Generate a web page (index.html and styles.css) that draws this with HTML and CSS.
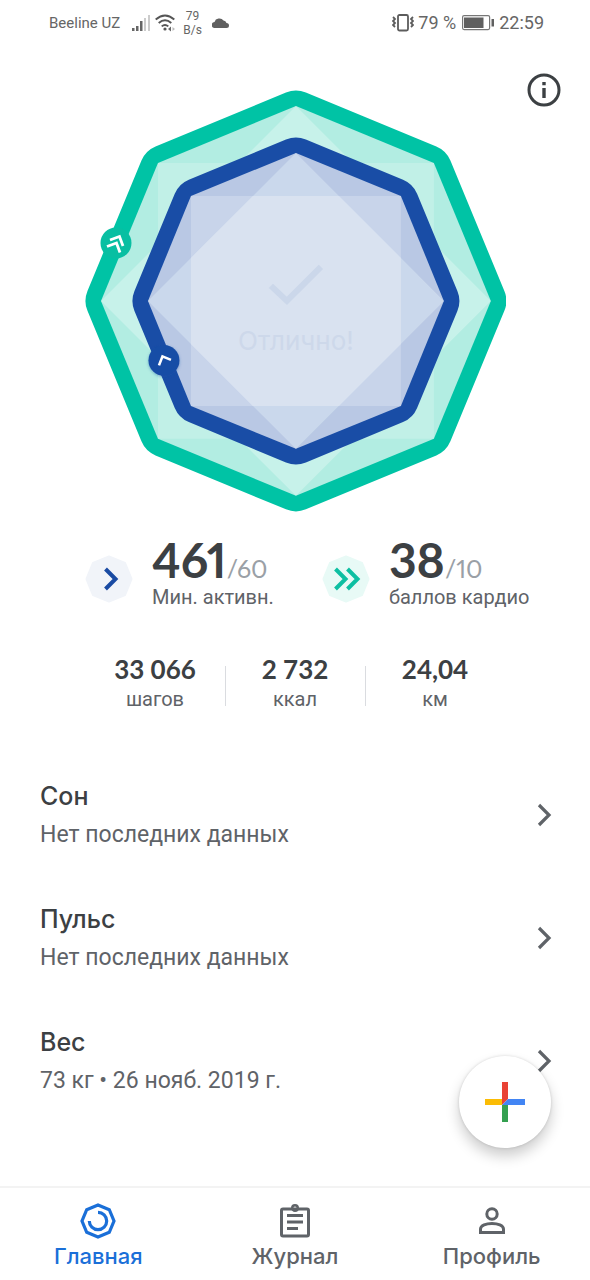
FILE: index.html
```html
<!DOCTYPE html>
<html lang="ru">
<head>
<meta charset="utf-8">
<meta name="viewport" content="width=device-width, initial-scale=1">
<title>Главная</title>
<link rel="stylesheet" href="styles.css">
</head>
<body>
<header class="status">
  <div class="status-group">
    <span class="carrier">Beeline UZ</span>
    <svg class="signal" width="18" height="18" viewBox="0 0 18 18" aria-hidden="true">
      <path fill="#666" d="M0 14h2.500v3H0zM4 12h2.500v5H4zM8 7h2.500v10H8z"/>
      <path fill="#ccc" d="M12 4h2v13h-2zM16 1h2v16h-2z"/>
    </svg>
    <svg class="wifi" width="20" height="18" viewBox="0 0 20 18" fill="none" stroke="#555" stroke-width="1.900" aria-hidden="true">
      <path d="M.7 5.500Q10-2.500 19.300 5.500M3.700 9Q10 3.500 16.300 9M6.700 12.400Q10 9.500 13.300 12.400"/>
      <circle cx="10" cy="15" r="1.600" fill="#555" stroke="none"/>
      <path fill="#666" stroke="none" d="M16 12.500v5L13 15z"/>
      <path fill="#bbb" stroke="none" d="M17.500 13l2.500 2-2.500 2z"/>
    </svg>
    <span class="speed">79<br>B/s</span>
    <svg class="cloud" width="17" height="10" viewBox="0 0 17 10" aria-hidden="true">
      <path fill="#606060" d="M3 10A3 3 0 0 1 2.500 4 5 4.500 0 0 1 11.500 2.500 3.500 3.500 0 0 1 14.500 5 2.500 2.500 0 0 1 14.500 10z"/>
    </svg>
  </div>
  <div class="status-group">
    <svg width="22" height="18" viewBox="0 0 22 18" fill="none" stroke="#5c5c5c" stroke-width="1.800" aria-hidden="true">
      <rect x="6" y="1" width="10" height="15.500" rx="1.500"/>
      <path d="M1 3l2 2-2 2 2 2-2 2 2 2M21 3l-2 2 2 2-2 2 2 2-2 2"/>
    </svg>
    <span class="clock">79 %</span>
    <svg class="battery" width="32" height="16" viewBox="0 0 32 16" aria-hidden="true">
      <rect x=".6" y=".6" width="27" height="14" rx="1.500" fill="none" stroke="#777" stroke-width="1.200"/>
      <path fill="#606060" d="M2 2.500h19.500v10.500H2zM29.500 4H32v7.500h-2.500z"/>
    </svg>
    <span class="clock">22:59</span>
  </div>
</header>

<main class="content">
  <section class="hero">
    <svg class="chart" viewBox="0 0 422 422" role="img" aria-label="Отлично!">
      <defs>
        <filter id="soft" x="-50%" y="-50%" width="200%" height="200%">
          <feDropShadow dx="0" dy="1" stdDeviation="1.500" flood-color="#1a4fa6" flood-opacity=".4"/>
        </filter>
      </defs>
      <g transform="translate(212 211)">
        <path fill="#00c3a5" stroke="#00c3a5" stroke-width="52" stroke-linejoin="round" d="M0-184.500L130.500-130.500 184.500 0 130.500 130.500 0 184.500-130.500 130.500-184.500 0-130.500-130.500z"/>
        <path fill="#b2ede2" d="M0-195L138-138 195 0 138 138 0 195-138 138-195 0-138-138z"/>
        <path fill="#fff" fill-opacity=".2" d="M-138-138h276v276h-276z"/>
        <path fill="#fff" fill-opacity=".28" d="M0-195L195 0 0 195-195 0z"/>
        <path fill="#194da6" stroke="#194da6" stroke-width="52" stroke-linejoin="round" d="M0-137.500L97.200-97.200 137.500 0 97.200 97.200 0 137.500-97.200 97.200-137.500 0-97.200-97.200z"/>
        <path fill="#b9c8e4" d="M0-148L105-105 148 0 105 105 0 148-105 105-148 0-105-105z"/>
        <path fill="#fff" fill-opacity=".22" d="M-105-105h210v210h-210z"/>
        <path fill="#d9e6f2" fill-opacity=".55" d="M0-148L148 0 0 148-148 0z"/>
        <path fill="#d9e2f0" d="M-43-105H43L105-43V43L43 105H-43L-105 43V-43z"/>
        <path fill="none" stroke="#cbd7ea" stroke-width="6" d="M-25-15L-9 0 25-34"/>
        <text class="chart-label" x="0" y="49">Отлично!</text>
        <circle cx="-180" cy="-58" r="15.500" fill="#08bfa2"/>
        <path fill="none" stroke="#fff" stroke-width="2.800" d="M-186-61L-176.500-64.500-173-55M-189-54.500L-179.500-58-176-48.500"/>
        <circle cx="-132" cy="59.500" r="15.500" fill="#194da6" filter="url(#soft)"/>
        <path fill="none" stroke="#fff" stroke-width="2.600" d="M-137 64.500L-133.500 55.500-125 59"/>
      </g>
    </svg>
    <button class="info" type="button" aria-label="Информация">
      <svg width="34" height="34" viewBox="0 0 34 34" aria-hidden="true">
        <circle cx="17" cy="17" r="15" fill="none" stroke="#3c4043" stroke-width="3"/>
        <path fill="#3c4043" d="M15.300 9h3.400v3.300h-3.400zM15.300 15h3.400v10h-3.400z"/>
      </svg>
    </button>
  </section>

  <section class="goals">
    <div class="goal">
      <svg class="goal-icon" width="48" height="48" viewBox="0 0 48 48" aria-hidden="true">
        <path fill="#f1f4f9" stroke="#f1f4f9" stroke-width="2" stroke-linejoin="round" d="M24 1.500l16 6.500 6.500 16L40 40l-16 6.500L8 40 1.500 24 8 8z"/>
        <path fill="none" stroke="#1a4ba3" stroke-width="4" d="M20.500 14L30.500 24l-10 10"/>
      </svg>
      <div>
        <div class="goal-value"><strong>461</strong><span>/60</span></div>
        <div class="caption">Мин. активн.</div>
      </div>
    </div>
    <div class="goal">
      <svg class="goal-icon" width="48" height="48" viewBox="0 0 48 48" aria-hidden="true">
        <path fill="#e8faf6" stroke="#e8faf6" stroke-width="2" stroke-linejoin="round" d="M24 1.500l16 6.500 6.500 16L40 40l-16 6.500L8 40 1.500 24 8 8z"/>
        <path fill="none" stroke="#0dbfa2" stroke-width="4" d="M13.500 14l10 10-10 10M25.500 14l10 10-10 10"/>
      </svg>
      <div>
        <div class="goal-value"><strong>38</strong><span>/10</span></div>
        <div class="caption">баллов кардио</div>
      </div>
    </div>
  </section>

  <section class="totals">
    <div class="total"><strong>33 066</strong><span class="caption">шагов</span></div>
    <div class="total"><strong>2 732</strong><span class="caption">ккал</span></div>
    <div class="total"><strong>24,04</strong><span class="caption">км</span></div>
  </section>

  <section class="cards">
    <a class="card" href="#sleep">
      <span><span class="card-title">Сон</span><span class="card-text">Нет последних данных</span></span>
      <svg width="16" height="24" viewBox="0 0 16 24" fill="none" stroke="#5f6368" stroke-width="3.200" aria-hidden="true"><path d="M3 2l10 10L3 22"/></svg>
    </a>
    <a class="card" href="#pulse">
      <span><span class="card-title">Пульс</span><span class="card-text">Нет последних данных</span></span>
      <svg width="16" height="24" viewBox="0 0 16 24" fill="none" stroke="#5f6368" stroke-width="3.200" aria-hidden="true"><path d="M3 2l10 10L3 22"/></svg>
    </a>
    <a class="card" href="#weight">
      <span><span class="card-title">Вес</span><span class="card-text">73 кг • 26 нояб. 2019 г.</span></span>
      <svg width="16" height="24" viewBox="0 0 16 24" fill="none" stroke="#5f6368" stroke-width="3.200" aria-hidden="true"><path d="M3 2l10 10L3 22"/></svg>
    </a>
  </section>
</main>

<footer class="bottom">
  <button class="fab" type="button" aria-label="Добавить">
    <svg width="40" height="40" viewBox="0 0 40 40" aria-hidden="true">
      <path fill="#e94235" d="M17 0h6v17l-6 6z"/>
      <path fill="#fbbc05" d="M0 17h17v6H0z"/>
      <path fill="#34a050" d="M17 23h6v17h-6z"/>
      <path fill="#4285f4" d="M23 17h17v6H17z"/>
    </svg>
  </button>
  <nav class="tabs">
    <a class="tab tab-active" href="#home" aria-current="page">
      <svg width="38" height="38" viewBox="0 0 38 38" fill="none" stroke="currentColor" stroke-width="3.200" aria-hidden="true">
        <path d="M19 3l11.300 4.700L35 19l-4.700 11.300L19 35 7.700 30.300 3 19 7.700 7.700z"/>
        <path d="M19 10.300A8.700 8.700 0 1 1 10.300 19"/>
      </svg>
      Главная
    </a>
    <a class="tab" href="#journal">
      <svg width="38" height="38" viewBox="0 0 38 38" fill="none" stroke="currentColor" stroke-width="3" aria-hidden="true">
        <rect x="5.500" y="7" width="27" height="27" rx="1.500"/>
        <path d="M11 13.500h16M11 20h16M11 26.500h11"/>
        <circle cx="19" cy="6" r="2.800" stroke-width="2.400"/>
      </svg>
      Журнал
    </a>
    <a class="tab" href="#profile">
      <svg width="38" height="38" viewBox="0 0 38 38" fill="none" stroke="currentColor" stroke-width="3" aria-hidden="true">
        <circle cx="19" cy="12" r="5.200"/>
        <path d="M7.500 30.500v-3.500C7.500 19.500 30.500 19.500 30.500 27v3.500z"/>
      </svg>
      Профиль
    </a>
  </nav>
</footer>
</body>
</html>
```
FILE: styles.css
```css
* { box-sizing: border-box; }

body {
  margin: 0;
  min-height: 100vh;
  display: flex;
  flex-direction: column;
  background: #fff;
  color: #3c4043;
  font-family: Roboto, "Noto Sans", sans-serif;
}

a { color: inherit; text-decoration: none; }
button { padding: 0; border: 0; background: none; cursor: pointer; }
svg { display: block; flex: none; }

.status {
  display: flex;
  justify-content: space-between;
  height: 45px;
  padding: 0 46px 0 49px;
  color: #666;
}
.status-group { display: flex; align-items: center; }
.carrier { font-size: 15px; }
.signal { margin-left: 12px; }
.wifi { margin-left: 5px; }
.speed { margin: 0 10px 0 8px; font-size: 12px; line-height: 14px; text-align: center; }
.clock { font-size: 18px; }
.status-group .clock:nth-child(2) { margin: 0 6px 0 4px; }
.battery { margin-right: 5px; }

.hero {
  display: grid;
  grid-template-columns: 1fr 71.5% 1fr;
  padding-top: 45px;
}
.chart { grid-column: 2; width: 100%; height: auto; }
.chart-label { font: 400 26px Inter, sans-serif; fill: #cdd8ea; text-anchor: middle; }
.info { align-self: start; justify-self: end; margin: -17px 29px 0 0; }

.goals {
  display: flex;
  gap: 48px;
  padding: 26px 40px 0 85px;
}
.goal { display: flex; gap: 19px; white-space: nowrap; }
.goal-icon { margin-top: 17px; }
.goal-value {
  display: flex;
  align-items: baseline;
  height: 47px;
  font-family: Lato, sans-serif;
  font-variant-numeric: proportional-nums;
  line-height: 44px;
}
.goal-value strong { font-size: 48px; }
.goal-value span { font-size: 25px; color: #9aa0a6; }
.caption { font-size: 20px; line-height: 24px; color: #5f6368; }

.totals { display: flex; justify-content: center; margin-top: 44px; }
.total {
  position: relative;
  width: 140px;
  display: flex;
  flex-direction: column;
  align-items: center;
  gap: 2px;
}
.total strong { font: bold 26px/32px Lato, sans-serif; }
.total + .total::before {
  content: "";
  position: absolute;
  left: 0;
  top: 13px;
  width: 1px;
  height: 40px;
  background: #dadce0;
}

.cards { padding: 43px 38px 0 40px; }
.card { display: flex; align-items: center; justify-content: space-between; height: 123px; }
.card-title, .card-text { display: block; }
.card-title { font: 500 25px/40px Inter, sans-serif; }
.card-text { font-size: 23px; line-height: 38px; color: #5f6368; }

.bottom { position: sticky; bottom: 0; margin-top: auto; background: #fff; }
.fab {
  position: absolute;
  right: 39px;
  bottom: 132px;
  width: 92px;
  height: 92px;
  display: grid;
  place-items: center;
  border-radius: 50%;
  background: #fff;
  box-shadow: 0 8px 14px rgba(0, 0, 0, .2), 0 0 3px rgba(0, 0, 0, .15);
}
.tabs {
  display: grid;
  grid-template-columns: repeat(3, 1fr);
  height: 94px;
  border-top: 2px solid #f3f3f3;
}
.tab {
  display: flex;
  flex-direction: column;
  align-items: center;
  padding-top: 14px;
  color: #5f6368;
  font: 500 22px/32px Inter, sans-serif;
}
.tab-active { color: #1a6fd8; }
```
